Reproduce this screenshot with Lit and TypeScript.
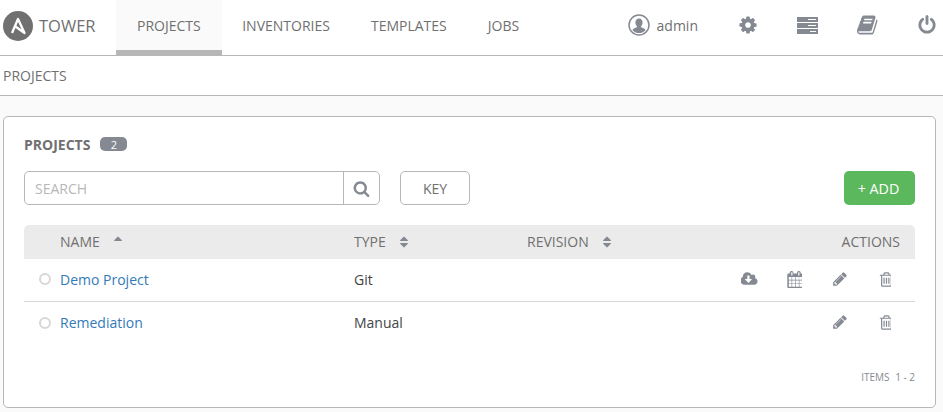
import { LitElement, html, css } from 'lit';
import { customElement } from 'lit/decorators.js';

const ICONS = {
  search: 'M1216 832q0-185-131.500-316.500t-316.500-131.500-316.500 131.500-131.500 316.500 131.500 316.500 316.500 131.500 316.500-131.500 131.500-316.500zm512 832q0 52-38 90t-90 38q-54 0-90-38l-343-342q-179 124-399 124-143 0-273.500-55.500t-225-150-150-225-55.500-273.500 55.500-273.500 150-225 225-150 273.500-55.500 273.500 55.500 225 150 150 225 55.500 273.500q0 220-124 399l343 343q37 37 37 90z',
  cog: 'M1152 896q0-106-75-181t-181-75-181 75-75 181 75 181 181 75 181-75 75-181zm512-109v222q0 12-8 23t-20 13l-185 28q-19 54-39 91 35 50 107 138 10 12 10 25t-9 23q-27 37-99 108t-94 71q-12 0-26-9l-138-108q-44 23-91 38-16 136-29 186-7 28-36 28h-222q-14 0-24.500-8.500t-11.500-21.500l-28-184q-49-16-90-37l-141 107q-10 9-25 9-14 0-25-11-126-114-165-168-7-10-7-23 0-12 8-23 15-21 51-66.500t54-70.500q-27-50-41-99l-183-27q-13-2-21-12.500t-8-23.500v-222q0-12 8-23t19-13l186-28q14-46 39-92-40-57-107-138-10-12-10-24 0-10 9-23 26-36 98.500-107.500t94.500-71.500q13 0 26 10l138 107q44-23 91-38 16-136 29-186 7-28 36-28h222q14 0 24.500 8.500t11.500 21.500l28 184q49 16 90 37l142-107q9-9 24-9 13 0 25 10 129 119 165 170 7 8 7 22 0 12-8 23-15 21-51 66.500t-54 70.500q26 50 41 98l183 28q13 2 21 12.500t8 23.500z',
  pencil: 'M491 1536l91-91-235-235-91 91v107h128v128h107zm523-928q0-22-22-22-10 0-17 7l-542 542q-7 7-7 17 0 22 22 22 10 0 17-7l542-542q7-7 7-17zm-54-192l416 416-832 832h-416v-416zm683 96q0 53-37 90l-166 166-416-416 166-165q36-38 90-38 53 0 91 38l235 234q37 39 37 91z',
  trash: 'M704 736v576q0 14-9 23t-23 9h-64q-14 0-23-9t-9-23v-576q0-14 9-23t23-9h64q14 0 23 9t9 23zm256 0v576q0 14-9 23t-23 9h-64q-14 0-23-9t-9-23v-576q0-14 9-23t23-9h64q14 0 23 9t9 23zm256 0v576q0 14-9 23t-23 9h-64q-14 0-23-9t-9-23v-576q0-14 9-23t23-9h64q14 0 23 9t9 23zm128 724v-948h-896v948q0 22 7 40.500t14.500 27 10.500 8.500h832q3 0 10.500-8.500t14.500-27 7-40.500zm-672-1076h448l-48-117q-7-9-17-11h-317q-10 2-17 11zm928 32v64q0 14-9 23t-23 9h-96v948q0 83-47 143.500t-113 60.500h-832q-66 0-113-58.500t-47-141.500v-952h-96q-14 0-23-9t-9-23v-64q0-14 9-23t23-9h309l70-167q15-37 54-63t79-26h320q40 0 79 26t54 63l70 167h309q14 0 23 9t9 23z',
  calendar: 'M192 1664h288v-288h-288v288zm352 0h320v-288h-320v288zm-352-352h288v-320h-288v320zm352 0h320v-320h-320v320zm-352-384h288v-288h-288v288zm736 736h320v-288h-320v288zm-384-736h320v-288h-320v288zm768 736h288v-288h-288v288zm-384-352h320v-320h-320v320zm-352-864v-288q0-13-9.500-22.500t-22.500-9.500h-64q-13 0-22.500 9.500t-9.500 22.500v288q0 13 9.500 22.500t22.500 9.500h64q13 0 22.500-9.500t9.500-22.500zm736 864h288v-320h-288v320zm-384-384h320v-288h-320v288zm352 0h288v-288h-288v288zm32-480v-288q0-13-9.500-22.500t-22.500-9.500h-64q-13 0-22.500 9.500t-9.500 22.500v288q0 13 9.500 22.500t22.500 9.500h64q13 0 22.500-9.500t9.500-22.500zm384-64v1280q0 52-38 90t-90 38h-1408q-52 0-90-38t-38-90v-1280q0-52 38-90t90-38h128v-96q0-66 47-113t113-47h64q66 0 113 47t47 113v96h384v-96q0-66 47-113t113-47h64q66 0 113 47t47 113v96h128q52 0 90 38t38 90z',
  cloud: 'M1216 928q0-14-9-23t-23-9h-224v-352q0-13-9.500-22.500t-22.500-9.500h-192q-13 0-22.500 9.500t-9.500 22.500v352h-224q-13 0-22.500 9.500t-9.500 22.500q0 14 9 23l352 352q9 9 23 9t23-9l351-352q10-12 10-24zm640 224q0 159-112.500 271.500t-271.500 112.500h-1088q-185 0-316.500-131.500t-131.500-316.500q0-130 70-240t188-165q-2-30-2-43 0-212 150-362t362-150q156 0 285.500 87t188.500 231q71-62 166-62 106 0 181 75t75 181q0 76-41 138 130 31 213.500 135.500t83.500 238.500z',
  power: 'M1664 896q0 156-61 298t-164 245-245 164-298 61-298-61-245-164-164-245-61-298q0-182 80.500-343t226.500-270q43-32 95.500-25t83.500 50q32 42 24.500 94.500t-49.500 84.500q-98 74-151.500 181t-53.500 228q0 104 40.500 198.500t109.500 163.500 163.500 109.500 198.500 40.500 198.500-40.500 163.500-109.500 109.500-163.500 40.500-198.500q0-121-53.500-228t-151.500-181q-42-32-49.500-84.500t24.500-94.500q31-43 84-50t95 25q146 109 226.500 270t80.500 343zm-640-768v640q0 52-38 90t-90 38-90-38-38-90v-640q0-52 38-90t90-38 90 38 38 90z',
  book: 'M1639 478q40 57 18 129l-275 906q-19 64-76.500 107.500t-122.500 43.500h-923q-77 0-148.500-53.500t-99.500-131.500q-24-67-2-127 0-4 3-27t4-37q1-8-3-21.500t-3-19.500q2-11 8-21t16.500-23.500 16.500-23.500q23-38 45-91.500t30-91.500q3-10 .5-30t-.5-28q3-11 17-28t17-23q21-36 42-92t25-90q1-9-2.500-32t.5-28q4-13 22-30.500t22-22.500q19-26 42.500-84.500t27.500-96.500q1-8-3-25.500t-2-26.500q2-8 9-18t18-23 17-21q8-12 16.500-30.500t15-35 16-36 19.500-32 26.500-23.500 36-11.500 47.500 5.500l-1 3q38-9 51-9h761q74 0 114 56t18 130l-274 906q-36 119-71.500 153.500t-128.500 34.500h-869q-27 0-38 15-11 16-1 43 24 70 144 70h923q29 0 56-15.500t35-41.500l300-987q7-22 5-57 38 15 59 43zm-1064 2q-4 13 2 22.500t20 9.500h608q13 0 25.500-9.500t16.500-22.500l21-64q4-13-2-22.500t-20-9.500h-608q-13 0-25.500 9.500t-16.500 22.500zm-83 256q-4 13 2 22.500t20 9.500h608q13 0 25.500-9.500t16.500-22.500l21-64q4-13-2-22.500t-20-9.500h-608q-13 0-25.500 9.500t-16.500 22.500z',
  sort: 'M1408 1088q0 26-19 45l-448 448q-19 19-45 19t-45-19l-448-448q-19-19-19-45t19-45 45-19h896q26 0 45 19t19 45zm0-384q0 26-19 45t-45 19h-896q-26 0-45-19t-19-45 19-45l448-448q19-19 45-19t45 19l448 448q19 19 19 45z',
  sortUp: 'M1408 704q0 26-19 45t-45 19h-896q-26 0-45-19t-19-45 19-45l448-448q19-19 45-19t45 19l448 448q19 19 19 45z',
};

const icon = (name: keyof typeof ICONS, size: number, width = 1792) => html`
  <svg class="fa" width=${(size * width) / 1792} height=${size} viewBox="0 0 ${width} 1792">
    <path d=${ICONS[name]}></path>
  </svg>
`;

const projects = [
  { name: 'Demo Project', type: 'Git', scm: true },
  { name: 'Remediation', type: 'Manual', scm: false },
];

@customElement('app-root')
export class AppRoot extends LitElement {
  static styles = css`
    :host {
      display: block;
      height: 412px;
      overflow: hidden;
      background: #fafafa;
      color: #707070;
      font-family: "Open Sans", sans-serif;
      font-size: 14px;
    }
    .fa {
      display: block;
      fill: #848992;
    }

    .nav {
      display: flex;
      height: 55px;
      background: #fff;
      border-bottom: 1px solid #b7b7b7;
    }
    .brand {
      display: flex;
      align-items: center;
      gap: 6px;
      width: 116px;
      padding: 0 0 0 3px;
      box-sizing: border-box;
      font-size: 16.500px;
      height: 51px;
    }
    .tab {
      display: flex;
      align-items: center;
      padding: 0 20.500px 5px;
    }
    .tab.active {
      padding: 0 21px;
      background: #fafafa;
      border-bottom: 5px solid #b7b7b7;
    }
    .tools {
      display: flex;
      align-items: center;
      gap: 38.500px;
      margin-left: auto;
      padding-right: 6px;
      height: 50px;
    }
    .user {
      display: flex;
      align-items: center;
      gap: 7px;
      margin-right: 1px;
    }
    .cog {
      margin-right: 1px;
    }

    .crumbs {
      display: flex;
      align-items: center;
      height: 39px;
      padding-left: 3px;
      background: #fff;
      border-bottom: 1px solid #b7b7b7;
    }

    .content {
      padding: 20px 7px 0 3px;
    }
    .card {
      height: 292px;
      box-sizing: border-box;
      padding: 20px 20px 0;
      background: #fff;
      border: 1px solid #b7b7b7;
      border-radius: 5px;
    }
    .title {
      display: flex;
      align-items: center;
      height: 14px;
      font-weight: 700;
    }
    .badge {
      display: flex;
      align-items: center;
      justify-content: center;
      width: 27px;
      height: 14px;
      margin-left: 10px;
      border-radius: 5px;
      background: #848992;
      color: #fff;
      font-size: 11px;
      font-weight: 400;
    }

    .toolbar {
      display: flex;
      margin-top: 20px;
      height: 34px;
    }
    .search {
      display: flex;
      width: 356px;
      box-sizing: border-box;
      border: 1px solid #b7b7b7;
      border-radius: 5px;
    }
    .search .input {
      flex: 1;
      display: flex;
      align-items: center;
      padding-left: 10px;
      color: #b7b7b7;
    }
    .search .go {
      display: flex;
      align-items: center;
      justify-content: center;
      width: 35px;
      border-left: 1px solid #b7b7b7;
    }
    .key {
      display: flex;
      align-items: center;
      justify-content: center;
      width: 70px;
      margin-left: 20px;
      box-sizing: border-box;
      border: 1px solid #b7b7b7;
      border-radius: 5px;
    }
    .add {
      display: flex;
      align-items: center;
      justify-content: center;
      width: 71px;
      margin-left: auto;
      padding-right: 2px;
      box-sizing: border-box;
      border-radius: 5px;
      background: #5cb85c;
      color: #fff;
      font-size: 14.300px;
    }

    .row {
      display: grid;
      grid-template-columns: 36px 294px 173px 1fr auto;
      align-items: center;
      box-sizing: border-box;
      padding-bottom: 2px;
    }
    .head {
      height: 34px;
      margin-top: 20px;
      background: #ebebeb;
      border-radius: 5px 5px 0 0;
    }
    .head .th {
      display: flex;
      align-items: center;
    }
    .head .th .fa {
      margin: 2px 0 0 11px;
    }
    .head .th.right {
      padding-right: 15px;
    }
    .item {
      height: 43px;
      color: #444;
      border-bottom: 1px solid #d7d7d7;
    }
    .item.last {
      border-bottom: none;
    }
    .status {
      width: 8px;
      height: 8px;
      margin-left: 15px;
      border: 2px solid #d7d7d7;
      border-radius: 50%;
    }
    .name {
      color: #337ab7;
    }
    .actions {
      display: flex;
      justify-content: flex-end;
      padding-right: 8px;
    }
    .action {
      display: flex;
      justify-content: center;
      width: 45px;
    }

    .pager {
      margin-top: 25px;
      text-align: right;
      color: #848992;
      font-size: 10px;
      line-height: 14px;
    }
    .pager span {
      margin-left: 3px;
    }
  `;

  render() {
    return html`
      <div class="nav">
        <div class="brand">
          <svg width="30" height="30" viewBox="0 0 30 30">
            <circle cx="15" cy="15" r="15" fill="#707070"></circle>
            <path d="M9 22 L15 8 L21.500 22 L12.500 15.500" fill="none" stroke="#fff" stroke-width="2.300" stroke-linejoin="round"></path>
          </svg>
          TOWER
        </div>
        <div class="tab active">PROJECTS</div>
        <div class="tab">INVENTORIES</div>
        <div class="tab">TEMPLATES</div>
        <div class="tab">JOBS</div>
        <div class="tools">
          <div class="user">
            <svg width="22" height="22" viewBox="0 0 22 22">
              <circle cx="11" cy="11" r="10" fill="#fff" stroke="#848992" stroke-width="1.500"></circle>
              <path d="M11 4.500c-2.300 0-3.600 1.800-3.600 3.900 0 1.500.6 2.900 1.500 3.700v1.200c-1.700.7-3.600 1.300-4.500 2.600 1.400 1.900 3.900 3.100 6.600 3.100s5.200-1.200 6.600-3.100c-.9-1.300-2.800-1.900-4.500-2.600v-1.200c.9-.8 1.500-2.200 1.500-3.700 0-2.100-1.300-3.900-3.600-3.900z" fill="#848992"></path>
            </svg>
            admin
          </div>
          <div class="cog">${icon('cog', 20)}</div>
          <svg width="21" height="17" viewBox="0 0 21 17">
            <rect width="21" height="5" fill="#848992"></rect>
            <rect y="6" width="21" height="5" fill="#848992"></rect>
            <rect y="12" width="21" height="5" fill="#848992"></rect>
            <rect x="11" y="2" width="8" height="1" fill="#fff"></rect>
            <rect x="11" y="8" width="8" height="1" fill="#fff"></rect>
            <rect x="13" y="14" width="6" height="1" fill="#fff"></rect>
          </svg>
          ${icon('book', 22)}
          ${icon('power', 20)}
        </div>
      </div>
      <div class="crumbs">PROJECTS</div>
      <div class="content">
        <div class="card">
          <div class="title">PROJECTS <span class="badge">2</span></div>
          <div class="toolbar">
            <div class="search">
              <div class="input">SEARCH</div>
              <div class="go">${icon('search', 17)}</div>
            </div>
            <div class="key">KEY</div>
            <div class="add">+ ADD</div>
          </div>
          <div class="row head">
            <div></div>
            <div class="th">NAME ${icon('sortUp', 14)}</div>
            <div class="th">TYPE ${icon('sort', 14)}</div>
            <div class="th">REVISION ${icon('sort', 14)}</div>
            <div class="th right">ACTIONS</div>
          </div>
          ${projects.map(
            (p, i) => html`
              <div class="row item ${i === projects.length - 1 ? 'last' : ''}">
                <div class="status"></div>
                <div class="name">${p.name}</div>
                <div>${p.type}</div>
                <div></div>
                <div class="actions">
                  ${p.scm
                    ? html`
                        <div class="action">${icon('cloud', 16, 1920)}</div>
                        <div class="action">${icon('calendar', 17, 1664)}</div>
                      `
                    : ''}
                  <div class="action">${icon('pencil', 16)}</div>
                  <div class="action">${icon('trash', 17, 1408)}</div>
                </div>
              </div>
            `,
          )}
          <div class="pager">ITEMS <span>1 - 2</span></div>
        </div>
      </div>
    `;
  }
}
